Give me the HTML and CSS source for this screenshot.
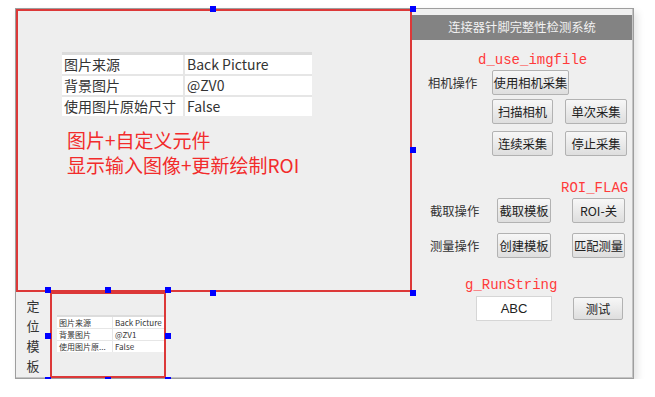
FILE: index.html
```html
<!DOCTYPE html>
<html lang="zh">
<head>
  <meta charset="UTF-8">
  <title>连接器针脚完整性检测系统</title>
  <link rel="stylesheet" href="styles.css">
</head>
<body>
  <div class="window">
    <div class="design">
      <div class="picture main-pic">
        <div class="props">
          <div class="props-head"></div>
          <div class="props-grid">
            <span>图片来源</span><span>Back Picture</span>
            <span>背景图片</span><span>@ZV0</span>
            <span>使用图片原始尺寸</span><span>False</span>
          </div>
        </div>
        <p class="note">图片+自定义元件</p>
        <p class="note">显示输入图像+更新绘制ROI</p>
      </div>
      <div class="tpl-row">
        <div class="tpl-label"><span>定</span><span>位</span><span>模</span><span>板</span></div>
        <div class="picture tpl-pic">
          <div class="props props-small">
            <div class="props-head"></div>
            <div class="props-grid">
              <span>图片来源</span><span>Back Picture</span>
              <span>背景图片</span><span>@ZV1</span>
              <span>使用图片原...</span><span>False</span>
            </div>
          </div>
        </div>
      </div>
    </div>

    <div class="panel">
      <div class="title">连接器针脚完整性检测系统</div>

      <div class="var var-img">d_use_imgfile</div>
      <div class="row row-cam">
        <span class="label label-cam">相机操作</span>
        <button class="btn btn-wide">使用相机采集</button>
      </div>
      <div class="row row-grab">
        <button class="btn btn-a">扫描相机</button>
        <button class="btn btn-b">单次采集</button>
      </div>
      <div class="row row-grab row-cont">
        <button class="btn btn-a">连续采集</button>
        <button class="btn btn-b">停止采集</button>
      </div>

      <div class="var var-roi">ROI_FLAG</div>
      <div class="row row-op">
        <span class="label">截取操作</span>
        <button class="btn btn-c">截取模板</button>
        <button class="btn btn-d">ROI-关</button>
      </div>
      <div class="row row-op row-measure">
        <span class="label">测量操作</span>
        <button class="btn btn-c">创建模板</button>
        <button class="btn btn-d">匹配测量</button>
      </div>

      <div class="var var-run">g_RunString</div>
      <div class="row row-test">
        <div class="text-box">ABC</div>
        <button class="btn btn-test">测试</button>
      </div>
    </div>

    <!-- selection handles -->
    <i class="handle" style="left:194px;top:-3px"></i>
    <i class="handle" style="left:394px;top:-3px"></i>
    <i class="handle" style="left:394px;top:138px"></i>
    <i class="handle" style="left:194px;top:281px"></i>
    <i class="handle" style="left:394px;top:281px"></i>
    <i class="handle" style="left:29px;top:278px"></i>
    <i class="handle" style="left:89px;top:278px"></i>
    <i class="handle" style="left:149px;top:278px"></i>
    <i class="handle" style="left:29px;top:324px"></i>
    <i class="handle" style="left:149px;top:324px"></i>
    <i class="handle" style="left:29px;top:368px"></i>
    <i class="handle" style="left:89px;top:368px"></i>
    <i class="handle" style="left:149px;top:368px"></i>
  </div>
</body>
</html>
```

FILE: styles.css
```css
body {
  margin: 0;
  background: #fff;
  font-family: "Noto Sans CJK SC", "Noto Sans", sans-serif;
  color: #333;
}

.window {
  position: relative;
  box-sizing: border-box;
  width: 619px;
  height: 371px;
  margin: 8px 0 0 15px;
  background: #efefef;
  border: 1px solid #9e9e9e;
  box-shadow: inset -1px -1px 0 #c4c4c4, 3px 4px 8px rgba(0, 0, 0, 0.12);
  display: grid;
  grid-template-columns: 396px 1fr;
}

/* left design area */
.design {
  display: flex;
  flex-direction: column;
}

.picture {
  box-sizing: border-box;
  border: 2px solid #dc3838;
  background: #eeeeee;
}

.main-pic {
  height: 283px;
  padding: 41px 0 0 44px;
}

.props {
  width: 250px;
}

.props-head {
  height: 3px;
  background: #dcdcdc;
}

.props-grid {
  display: grid;
  grid-template-columns: 121px 127px;
  grid-auto-rows: 19px;
  gap: 2px;
  background: #e6e6e6;
  font-size: 14px;
  line-height: 19px;
}

.props-grid span {
  background: #fff;
  padding-left: 2px;
  white-space: nowrap;
  overflow: hidden;
}

.note {
  margin: 0 0 0 5px;
  color: #f22b2b;
  font-size: 19px;
  line-height: 28px;
}

.props + .note {
  margin-top: 10px;
}

.note + .note {
  margin-top: -3px;
}

.tpl-row {
  display: flex;
  height: 86px;
}

.tpl-label {
  width: 34px;
  padding-top: 4px;
  display: flex;
  flex-direction: column;
  align-items: center;
  font-size: 13px;
  line-height: 20px;
  color: #333;
}

.tpl-pic {
  width: 116px;
  padding: 21px 0 0 5px;
}

.props-small {
  width: 107px;
}

.props-small .props-head {
  height: 2px;
}

.props-small .props-grid {
  grid-template-columns: 55px 51px;
  grid-auto-rows: 11px;
  gap: 1px;
  font-size: 8px;
  line-height: 11px;
}

/* right control panel */
.panel {
  display: flex;
  flex-direction: column;
  font-size: 12.3px;
}

.title {
  height: 25px;
  margin: 6px 1px 0 0;
  background: #838383;
  color: #f2f2f2;
  text-align: center;
  line-height: 25px;
}

.var {
  font-family: "Liberation Mono", monospace;
  font-size: 14px;
  line-height: 16px;
  color: #ff3a3a;
}

.var-img { margin: 12px 0 0 66px; }
.var-roi { margin: 24px 0 0 149px; }
.var-run { margin: 19px 0 0 53px; }

.row {
  display: flex;
  align-items: center;
}

.label {
  box-sizing: border-box;
  width: 85px;
  padding-left: 18px;
  color: #333;
}

.label-cam {
  width: 80px;
  padding-left: 16px;
}

.btn {
  box-sizing: border-box;
  height: 25px;
  padding: 0;
  font-family: inherit;
  font-size: 12.3px;
  color: #222;
  background: linear-gradient(#f7f7f7, #dedede);
  border: 1px solid #b2b2b2;
  border-radius: 2px;
}

.row-cam { margin-top: 2px; }
.btn-wide { width: 77px; }

.row-grab {
  margin-top: 4px;
  padding-left: 80px;
  gap: 12px;
}
.row-cont { margin-top: 7px; }
.btn-a { width: 61px; }
.btn-b { width: 62px; }

.row-op { margin-top: 2px; }
.row-measure { margin-top: 10px; }
.btn-c { width: 54px; }
.btn-d { width: 53px; margin-left: 21px; }

.row-test {
  margin-top: 3px;
  padding-left: 64px;
}

.text-box {
  width: 76px;
  height: 25px;
  box-sizing: border-box;
  background: #fff;
  border: 1px solid #d6d6d6;
  text-align: center;
  font-family: "Liberation Sans", sans-serif;
  font-size: 13px;
  line-height: 23px;
  color: #222;
}

.btn-test {
  width: 50px;
  height: 23px;
  margin-left: 21px;
}

.handle {
  position: absolute;
  width: 6px;
  height: 6px;
  background: #0000ff;
}
```
